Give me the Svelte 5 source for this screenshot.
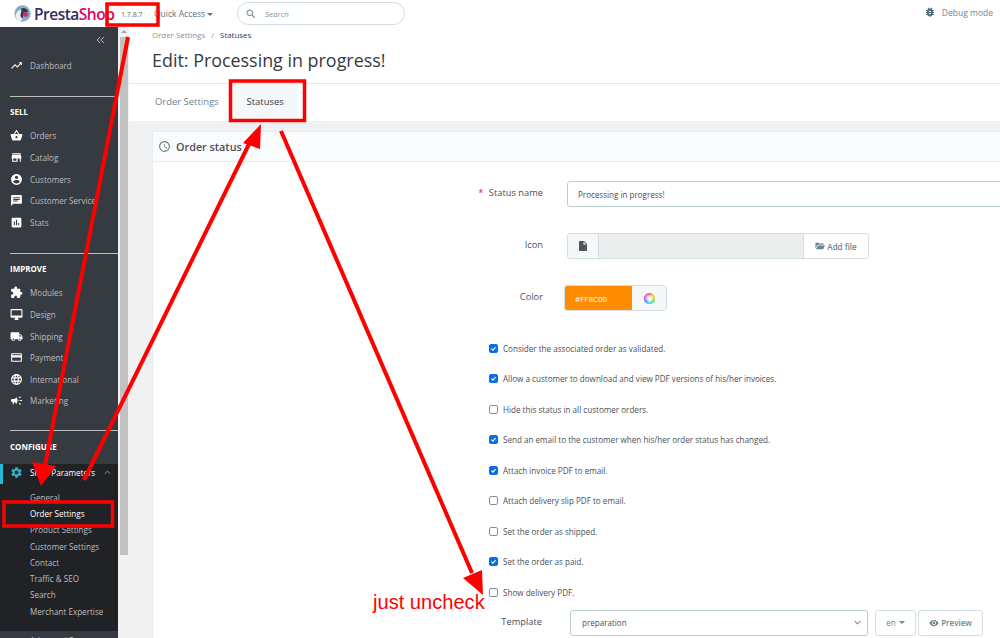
<script>
  const icons = {
    trend: 'M16 6l2.29 2.29-4.88 4.88-4-4L2 16.59 3.41 18l6-6 4 4 6.3-6.29L22 12V6z',
    basket: 'M17.21 9l-4.38-6.56c-.19-.28-.51-.42-.83-.42-.32 0-.64.14-.83.43L6.79 9H2c-.55 0-1 .45-1 1 0 .09.01.18.04.27l2.54 9.27c.23.84 1 1.46 1.92 1.46h13c.92 0 1.69-.62 1.93-1.46l2.54-9.27L23 10c0-.55-.45-1-1-1h-4.79zM9 9l3-4.4L15 9H9zm3 8c-1.1 0-2-.9-2-2s.9-2 2-2 2 .9 2 2-.9 2-2 2z',
    store: 'M20 4H4v2h16V4zm1 10v-2l-1-5H4l-1 5v2h1v6h10v-6h4v6h2v-6h1zm-9 4H6v-4h6v4z',
    account: 'M12 2C6.48 2 2 6.48 2 12s4.48 10 10 10 10-4.48 10-10S17.52 2 12 2zm0 3c1.66 0 3 1.34 3 3s-1.34 3-3 3-3-1.34-3-3 1.34-3 3-3zm0 14.2c-2.5 0-4.71-1.28-6-3.22.03-1.99 4-3.08 6-3.08 1.99 0 5.97 1.09 6 3.08-1.29 1.94-3.5 3.22-6 3.22z',
    chat: 'M20 2H4c-1.1 0-1.99.9-1.99 2L2 22l4-4h14c1.1 0 2-.9 2-2V4c0-1.1-.9-2-2-2zM6 9h12v2H6V9zm8 5H6v-2h8v2zm4-6H6V6h12v2z',
    stats: 'M19 3H5c-1.1 0-2 .9-2 2v14c0 1.1.9 2 2 2h14c1.1 0 2-.9 2-2V5c0-1.1-.9-2-2-2zM9 17H7v-7h2v7zm4 0h-2V7h2v10zm4 0h-2v-4h2v4z',
    puzzle: 'M20.5 11H19V7c0-1.1-.9-2-2-2h-4V3.5C13 2.12 11.88 1 10.5 1S8 2.12 8 3.5V5H4c-1.1 0-1.99.9-1.99 2v3.8H3.5c1.49 0 2.7 1.21 2.7 2.7s-1.21 2.7-2.7 2.7H2V20c0 1.1.9 2 2 2h3.8v-1.5c0-1.49 1.21-2.7 2.7-2.7 1.49 0 2.7 1.21 2.7 2.7V22H17c1.1 0 2-.9 2-2v-4h1.5c1.38 0 2.5-1.12 2.5-2.5S21.88 11 20.5 11z',
    desktop: 'M21 2H3c-1.1 0-2 .9-2 2v12c0 1.1.9 2 2 2h7l-2 3v1h8v-1l-2-3h7c1.1 0 2-.9 2-2V4c0-1.1-.9-2-2-2zm0 12H3V4h18v10z',
    truck: 'M20 8h-3V4H3c-1.1 0-2 .9-2 2v11h2c0 1.66 1.34 3 3 3s3-1.34 3-3h6c0 1.66 1.34 3 3 3s3-1.34 3-3h2v-5l-3-4zM6 18.5c-.83 0-1.5-.67-1.5-1.5s.67-1.5 1.5-1.5 1.5.67 1.5 1.5-.67 1.5-1.5 1.5zm13.5-9l1.96 2.5H17V9.5h2.5zm-1.5 9c-.83 0-1.5-.67-1.5-1.5s.67-1.5 1.5-1.5 1.5.67 1.5 1.5-.67 1.5-1.5 1.5z',
    card: 'M20 4H4c-1.11 0-1.99.89-1.99 2L2 18c0 1.11.89 2 2 2h16c1.11 0 2-.89 2-2V6c0-1.11-.89-2-2-2zm0 14H4v-6h16v6zm0-10H4V6h16v2z',
    globe: 'M11.99 2C6.47 2 2 6.48 2 12s4.47 10 9.99 10C17.52 22 22 17.52 22 12S17.52 2 11.99 2zm6.93 6h-2.95c-.32-1.25-.78-2.45-1.38-3.56 1.84.63 3.37 1.91 4.33 3.56zM12 4.04c.83 1.2 1.48 2.53 1.91 3.96h-3.82c.43-1.43 1.08-2.76 1.91-3.96zM4.26 14C4.1 13.36 4 12.69 4 12s.1-1.36.26-2h3.38c-.08.66-.14 1.32-.14 2 0 .68.06 1.34.14 2H4.26zm.82 2h2.95c.32 1.25.78 2.45 1.38 3.56-1.84-.63-3.37-1.9-4.33-3.56zm2.95-8H5.08c.96-1.66 2.49-2.93 4.33-3.56C8.81 5.55 8.35 6.75 8.03 8zM12 19.96c-.83-1.2-1.48-2.53-1.91-3.96h3.82c-.43 1.43-1.08 2.76-1.91 3.96zM14.34 14H9.66c-.09-.66-.16-1.32-.16-2 0-.68.07-1.35.16-2h4.68c.09.65.16 1.32.16 2 0 .68-.07 1.34-.16 2zm.25 5.56c.6-1.11 1.06-2.31 1.38-3.56h2.95c-.96 1.65-2.49 2.93-4.33 3.56zM16.36 14c.08-.66.14-1.32.14-2 0-.68-.06-1.34-.14-2h3.38c.16.64.26 1.31.26 2s-.1 1.36-.26 2h-3.38z',
    horn: 'M18 11v2h4v-2h-4zm-2 6.61c.96.71 2.21 1.65 3.2 2.39.4-.53.8-1.07 1.2-1.6-.99-.74-2.24-1.68-3.2-2.4-.4.54-.8 1.08-1.2 1.61zM20.4 5.6c-.4-.53-.8-1.07-1.2-1.6-.99.74-2.24 1.68-3.2 2.4.4.53.8 1.07 1.2 1.6.96-.72 2.21-1.65 3.2-2.4zM4 9c-1.1 0-2 .9-2 2v2c0 1.1.9 2 2 2h1v4h2v-4h1l5 3V6L8 9H4zm11.5 3c0-1.33-.58-2.53-1.5-3.35v6.69c.92-.81 1.5-2.01 1.5-3.34z',
    gear: 'M19.14 12.94c.04-.3.06-.61.06-.94 0-.32-.02-.64-.07-.94l2.03-1.58c.18-.14.23-.41.12-.61l-1.92-3.32c-.12-.22-.37-.29-.59-.22l-2.39.96c-.5-.38-1.03-.7-1.62-.94l-.36-2.54c-.04-.24-.24-.41-.48-.41h-3.84c-.24 0-.43.17-.47.41l-.36 2.54c-.59.24-1.13.57-1.62.94l-2.39-.96c-.22-.08-.47 0-.59.22L2.74 8.87c-.12.21-.08.47.12.61l2.03 1.58c-.05.3-.09.63-.09.94s.02.64.07.94l-2.03 1.58c-.18.14-.23.41-.12.61l1.92 3.32c.12.22.37.29.59.22l2.39-.96c.5.38 1.03.7 1.62.94l.36 2.54c.05.24.24.41.48.41h3.84c.24 0 .44-.17.47-.41l.36-2.54c.59-.24 1.13-.56 1.62-.94l2.39.96c.22.08.47 0 .59-.22l1.92-3.32c.12-.22.07-.47-.12-.61l-2.01-1.58zM12 15.6c-1.98 0-3.6-1.62-3.6-3.6s1.62-3.6 3.6-3.6 3.6 1.62 3.6 3.6-1.62 3.6-3.6 3.6z',
    bug: 'M20 8h-2.81c-.45-.78-1.07-1.45-1.82-1.96L17 4.41 15.59 3l-2.17 2.17C12.96 5.06 12.49 5 12 5c-.49 0-.96.06-1.41.17L8.41 3 7 4.41l1.62 1.63C7.88 6.55 7.26 7.22 6.81 8H4v2h2.09c-.05.33-.09.66-.09 1v1H4v2h2v1c0 .34.04.67.09 1H4v2h2.81c1.04 1.79 2.97 3 5.19 3s4.15-1.21 5.19-3H20v-2h-2.09c.05-.33.09-.66.09-1v-1h2v-2h-2v-1c0-.34-.04-.67-.09-1H20V8zm-6 8h-4v-2h4v2zm0-4h-4v-2h4v2z',
    search: 'M15.5 14h-.79l-.28-.27C15.41 12.59 16 11.11 16 9.5 16 5.91 13.09 3 9.5 3S3 5.91 3 9.5 5.91 16 9.5 16c1.61 0 3.09-.59 4.23-1.57l.27.28v.79l5 4.99L20.49 19l-4.99-5zm-6 0C7.01 14 5 11.99 5 9.5S7.01 5 9.5 5 14 7.01 14 9.5 11.99 14 9.5 14z',
    clock: 'M11.99 2C6.47 2 2 6.48 2 12s4.47 10 9.99 10C17.52 22 22 17.52 22 12S17.52 2 11.99 2zM12 20c-4.42 0-8-3.58-8-8s3.58-8 8-8 8 3.58 8 8-3.58 8-8 8zm.5-13H11v6l5.25 3.15.75-1.23-4.5-2.67z',
    file: 'M6 2c-1.1 0-1.99.9-1.99 2L4 20c0 1.1.89 2 1.99 2H18c1.1 0 2-.9 2-2V8l-6-6H6zm7 7V3.5L18.5 9H13z',
    folder: 'M1 6c0-1.1.9-2 2-2h6l2 2h8c1.1 0 2 .9 2 2v1H6.5L1 18V6zm6.5 5H24l-4.5 9H2z',
    eye: 'M12 4.5C7 4.5 2.73 7.61 1 12c1.73 4.39 6 7.5 11 7.5s9.27-3.11 11-7.5c-1.73-4.39-6-7.5-11-7.5zM12 17c-2.76 0-5-2.24-5-5s2.24-5 5-5 5 2.24 5 5-2.24 5-5 5zm0-8c-1.66 0-3 1.34-3 3s1.34 3 3 3 3-1.34 3-3-1.34-3-3-3z'
  };

  const sell = [
    ['Orders', 'basket'],
    ['Catalog', 'store'],
    ['Customers', 'account'],
    ['Customer Service', 'chat'],
    ['Stats', 'stats']
  ];
  const improve = [
    ['Modules', 'puzzle'],
    ['Design', 'desktop'],
    ['Shipping', 'truck'],
    ['Payment', 'card'],
    ['International', 'globe'],
    ['Marketing', 'horn']
  ];
  const subItems = ['General', 'Order Settings', 'Product Settings', 'Customer Settings', 'Contact', 'Traffic & SEO', 'Search', 'Merchant Expertise'];

  const options = [
    ['Consider the associated order as validated.', true],
    ['Allow a customer to download and view PDF versions of his/her invoices.', true],
    ['Hide this status in all customer orders.', false],
    ['Send an email to the customer when his/her order status has changed.', true],
    ['Attach invoice PDF to email.', true],
    ['Attach delivery slip PDF to email.', false],
    ['Set the order as shipped.', false],
    ['Set the order as paid.', true],
    ['Show delivery PDF.', false]
  ];
</script>

{#snippet icon(name, cls)}
  <svg class={cls} viewBox="0 0 24 24" aria-hidden="true"><path d={icons[name]} fill="currentColor" /></svg>
{/snippet}

{#snippet navItem(item)}
  <a class="nav-item">
    {@render icon(item[1], 'nav-icon')}
    <span>{item[0]}</span>
  </a>
{/snippet}

<div class="page">
  <header class="topbar">
    <div class="logo">
      <svg class="puffin" viewBox="0 0 24 24" aria-hidden="true">
        <circle cx="12" cy="12" r="11.500" fill="#7fb3c2" />
        <path d="M2 15c2-7 7-9 11-8 2 2 1 6 0 9-1 3-2 6-4 7-3-1-6-4-7-8z" fill="#f4f1ec" />
        <path d="M10 5c4-2 9 0 10 5l-6 1-2 8c-2-1-3-3-3-5 1-3 2-6 1-9z" fill="#3a3650" />
        <path d="M13 10l8 2-3 5-5-1z" fill="#e0236f" />
      </svg>
      <span class="logo-text"><span class="presta">Presta</span><span class="shop">Shop</span></span>
    </div>
    <span class="version">1.7.8.7</span>
    <span class="quick">Quick Access <i class="caret"></i></span>
    <div class="search">
      {@render icon('search', 'search-icon')}
      <span>Search</span>
    </div>
    <div class="debug">
      {@render icon('bug', 'debug-icon')}
      <span>Debug mode</span>
    </div>
  </header>

  <div class="body">
    <aside class="sidebar">
      <div class="collapse">
        <svg viewBox="0 0 12 10" aria-hidden="true"><path d="M5.5 1L1.5 5l4 4M10.5 1l-4 4 4 4" fill="none" stroke="currentColor" stroke-width="1.3" /></svg>
      </div>
      <a class="nav-item dash">
        {@render icon('trend', 'nav-icon')}
        <span>Dashboard</span>
      </a>
      <div class="group first">
        <h5>SELL</h5>
        {#each sell as item}{@render navItem(item)}{/each}
      </div>
      <div class="group second">
        <h5>IMPROVE</h5>
        {#each improve as item}{@render navItem(item)}{/each}
      </div>
      <div class="group third">
        <h5>CONFIGURE</h5>
      </div>
      <div class="open">
        <a class="nav-item active">
          {@render icon('gear', 'nav-icon gear')}
          <span>Shop Parameters</span>
          <svg class="chev" viewBox="0 0 10 6" aria-hidden="true"><path d="M1 5l4-4 4 4" fill="none" stroke="currentColor" stroke-width="1" /></svg>
        </a>
        <ul>
          {#each subItems as sub, i}
            <li class:current={i === 1}>{sub}</li>
          {/each}
        </ul>
      </div>
      <a class="nav-item after"><span>Advanced Parameters</span></a>
    </aside>

    <div class="scrollbar">
      <i class="up"></i>
      <div class="thumb"></div>
    </div>

    <main class="content">
      <div class="head">
        <div class="crumbs"><span>Order Settings</span><em>/</em><b>Statuses</b></div>
        <h1>Edit: Processing in progress!</h1>
      </div>
      <nav class="tabs">
        <a>Order Settings</a>
        <a class="tab-on">Statuses</a>
      </nav>
      <div class="canvas">
        <section class="card">
          <div class="card-head">
            {@render icon('clock', 'clock')}
            <span>Order status</span>
          </div>
          <div class="card-body">
            <div class="row name-row">
              <label class="lbl"><i>*</i> Status name</label>
              <div class="input name">Processing in progress!</div>
            </div>
            <div class="row icon-row">
              <label class="lbl">Icon</label>
              <div class="file">
                <div class="file-ico">{@render icon('file', 'file-icon')}</div>
                <div class="file-path"></div>
                <div class="file-btn">{@render icon('folder', 'btn-icon')} Add file</div>
              </div>
            </div>
            <div class="row color-row">
              <label class="lbl">Color</label>
              <div class="color">
                <div class="swatch">#FF8C00</div>
                <div class="wheel-box"><i class="wheel"></i></div>
              </div>
            </div>
            <div class="checks">
              {#each options as opt}
                <div class="check">
                  <i class="box" class:on={opt[1]}>
                    {#if opt[1]}
                      <svg viewBox="0 0 10 10" aria-hidden="true"><path d="M2 5.2l2.2 2.2L8 3" fill="none" stroke="#fff" stroke-width="1.5" /></svg>
                    {/if}
                  </i>
                  <span>{opt[0]}</span>
                </div>
              {/each}
            </div>
            <div class="row tpl-row">
              <label class="lbl tpl-lbl">Template</label>
              <div class="input select">
                <span>preparation</span>
                <svg viewBox="0 0 10 6" aria-hidden="true"><path d="M1 1l4 4 4-4" fill="none" stroke="#444" stroke-width="1.4" /></svg>
              </div>
              <div class="lang">en <i class="caret"></i></div>
              <div class="preview">{@render icon('eye', 'btn-icon')} Preview</div>
            </div>
          </div>
        </section>
      </div>
    </main>
  </div>

  <!-- red markup drawn over the screenshot -->
  <svg class="markup" viewBox="0 0 1000 638" aria-hidden="true">
    <g fill="none" stroke="#f00" stroke-width="3.500">
      <rect x="107" y="4" width="51" height="21" />
      <rect x="230.500" y="81" width="74" height="39.500" />
      <rect x="4" y="502" width="108.500" height="24" />
    </g>
    <g stroke="#f00" stroke-width="4" fill="#f00">
      <path d="M128 37L45 465" />
      <path d="M84 480L250 142" />
      <path d="M281 131L472 573" />
    </g>
    <g fill="#f00">
      <path d="M41 486L32 462L56 466z" />
      <path d="M261 124L243 143L260 149z" />
      <path d="M483 595L463 578L482 570z" />
    </g>
  </svg>
  <div class="note">just uncheck</div>
</div>

<style>
  :global(body) {
    margin: 0;
    background: #fff;
  }

  .page {
    position: relative;
    width: 1000px;
    height: 638px;
    overflow: hidden;
    font-family: "Open Sans", "Liberation Sans", sans-serif;
    font-size: 8.100px;
    color: #4b4f56;
  }

  .topbar {
    display: flex;
    align-items: center;
    height: 27px;
    background: #fff;
  }
  .logo {
    display: flex;
    align-items: center;
    gap: 3px;
    width: 121px;
    padding-left: 14px;
    box-sizing: border-box;
    flex: none;
  }
  .puffin {
    width: 17px;
    height: 17px;
    flex: none;
  }
  .logo-text {
    font-weight: 600;
    font-size: 15.500px;
    letter-spacing: -0.5px;
    white-space: nowrap;
  }
  .presta { color: #352c5c; }
  .shop { color: #df0067; }
  .version {
    font-size: 7px;
    width: 33px;
    margin-top: 1px;
    color: #666;
    flex: none;
  }
  .quick {
    font-size: 8.500px;
    width: 83px;
    color: #6c6f75;
    flex: none;
    white-space: nowrap;
  }
  .caret {
    display: inline-block;
    border: 3px solid transparent;
    border-top-color: currentColor;
    border-bottom: 0;
    vertical-align: 1px;
  }
  .search {
    display: flex;
    align-items: center;
    gap: 8px;
    width: 168px;
    height: 23px;
    box-sizing: border-box;
    padding-left: 7px;
    border: 1px solid #cfdde2;
    border-radius: 12px;
    color: #8a8f94;
    font-size: 8px;
    font-style: italic;
    flex: none;
  }
  .search-icon {
    width: 12px;
    height: 12px;
    color: #6c868e;
  }
  .debug {
    display: flex;
    align-items: center;
    gap: 6px;
    margin-left: auto;
    margin-right: 7px;
    margin-top: -3px;
    color: #6c868e;
    font-size: 8.500px;
  }
  .debug-icon {
    width: 12px;
    height: 12px;
    color: #4f6f7d;
  }

  .body {
    display: flex;
    height: 611px;
  }

  .sidebar {
    width: 118px;
    flex: none;
    background: #363a41;
    color: #bebebe;
    overflow: hidden;
  }
  .collapse {
    height: 26px;
    display: flex;
    justify-content: flex-end;
    align-items: center;
    padding-right: 13px;
  }
  .collapse svg {
    width: 9px;
    height: 8px;
  }
  .nav-item {
    display: flex;
    align-items: center;
    height: 21.600px;
    padding-left: 10px;
    gap: 7px;
    white-space: nowrap;
  }
  .nav-icon {
    width: 13px;
    height: 13px;
    color: #fff;
    flex: none;
  }
  .dash {
    margin-top: 2px;
  }
  .group {
    margin: 0 0 0 10px;
    border-top: 1px solid #bebebe;
  }
  .group .nav-item {
    margin-left: -10px;
  }
  .group h5 {
    margin: 0;
    color: #fff;
    font-size: 8px;
    font-weight: 700;
    line-height: 11px;
    padding-top: 9.500px;
    padding-bottom: 8px;
  }
  .first { margin-top: 19px; padding-bottom: 19.500px; }
  .second { padding-bottom: 18.500px; }
  .third { padding-bottom: 4px; }

  .open {
    background: #202226;
    height: 167px;
  }
  .active {
    box-sizing: border-box;
    height: 20px;
    border-left: 3px solid #25b9d7;
    padding-left: 7px;
    padding-bottom: 2px;
    color: #fff;
  }
  .gear {
    color: #25b9d7;
  }
  .chev {
    width: 7px;
    height: 5px;
    margin-left: 2px;
    color: #bebebe;
  }
  .open ul {
    list-style: none;
    margin: 6px 0 0;
    padding: 0 0 0 30px;
  }
  .open li {
    height: 16.300px;
    line-height: 16.300px;
    white-space: nowrap;
  }
  .open li.current {
    color: #fff;
  }
  .after {
    padding-left: 30px;
    height: 20px;
  }

  .scrollbar {
    width: 11px;
    flex: none;
    background: #f1f1f1;
  }
  .up {
    display: block;
    width: 0;
    margin: 3px auto 0;
    border: 3px solid transparent;
    border-top: 0;
    border-bottom: 3px solid #a3a3a3;
  }
  .thumb {
    margin: 4px 1px 0 2px;
    height: 518px;
    background: #c1c1c1;
  }

  .content {
    flex: 1;
    min-width: 0;
    display: flex;
    flex-direction: column;
    background: #eff1f2;
    overflow: hidden;
  }
  .head {
    flex: none;
    height: 57px;
    background: #fff;
    padding-left: 23px;
    border-bottom: 1px solid #e5e8ea;
    box-sizing: border-box;
  }
  .crumbs {
    display: flex;
    gap: 6px;
    font-size: 7.900px;
    line-height: 17px;
    color: #8a9298;
  }
  .crumbs em {
    font-style: normal;
  }
  .crumbs b {
    font-weight: 400;
    color: #363a41;
  }
  h1 {
    margin: 3px 0 0;
    font-size: 17.900px;
    line-height: 26px;
    font-weight: 400;
    color: #363a41;
  }
  .tabs {
    flex: none;
    display: flex;
    height: 37px;
    background: #fff;
    padding-left: 14px;
    align-items: stretch;
    font-size: 9.450px;
    color: #6c868e;
    box-sizing: border-box;
  }
  .tabs a {
    display: flex;
    align-items: center;
    padding: 0 12px 2px;
  }
  .tab-on {
    background: #f4f8fb;
    color: #363a41;
    padding: 0 14px 2px 16px !important;
  }
  .canvas {
    flex: none;
    padding: 10px 0 0 23px;
  }
  .card {
    width: 1000px;
    background: #fff;
    border: 1px solid #e8ecee;
    border-radius: 3px;
    height: 700px;
  }
  .card-head {
    display: flex;
    align-items: center;
    gap: 5px;
    height: 29px;
    padding-left: 5px;
    background: #fafbfc;
    border-bottom: 1px solid #e8ecee;
    font-size: 10.800px;
    font-weight: 600;
    color: #4b4f56;
  }
  .clock {
    width: 13px;
    height: 13px;
    color: #6c868e;
  }
  .card-body {
    padding-top: 19px;
  }

  .row {
    display: flex;
    align-items: flex-start;
  }
  .lbl {
    width: 390px;
    margin-right: 24px;
    text-align: right;
    font-size: 9.300px;
    line-height: 12px;
    flex: none;
    color: #4b4f56;
  }
  .lbl i {
    color: #e50b70;
    font-style: normal;
    margin-right: 3px;
  }
  .input {
    box-sizing: border-box;
    height: 26px;
    border: 1px solid #bbcdd2;
    border-radius: 3px;
    background: #fff;
    display: flex;
    align-items: center;
    padding-left: 10px;
    font-size: 8.050px;
  }
  .name {
    width: 600px;
  }
  .name-row .lbl {
    margin-top: 6px;
  }
  .icon-row {
    margin-top: 26px;
  }
  .icon-row .lbl, .color-row .lbl {
    padding-top: 6px;
  }
  .file {
    display: flex;
    box-sizing: border-box;
    width: 302px;
    height: 26px;
    border: 1px solid #d3dfe3;
    border-radius: 3px;
    overflow: hidden;
  }
  .file-ico {
    width: 30px;
    display: flex;
    align-items: center;
    justify-content: center;
    background: #f4f8fb;
    border-right: 1px solid #d3dfe3;
  }
  .file-icon {
    width: 12px;
    height: 12px;
    color: #555;
  }
  .file-path {
    flex: 1;
    background: #eceeed;
  }
  .file-btn {
    width: 64px;
    display: flex;
    align-items: center;
    justify-content: center;
    gap: 2px;
    border-left: 1px solid #d3dfe3;
    font-weight: 600;
    font-size: 8px;
    color: #6c868e;
  }
  .btn-icon {
    width: 10px;
    height: 10px;
    color: #6c868e;
  }
  .color-row {
    margin-top: 26px;
  }
  .color {
    display: flex;
    box-sizing: border-box;
    width: 103px;
    height: 26px;
    margin-left: -3px;
    border: 1px solid #d3dfe3;
    border-radius: 3px;
    overflow: hidden;
  }
  .swatch {
    width: 67px;
    display: flex;
    align-items: center;
    padding-left: 10px;
    box-sizing: border-box;
    background: #ff8c00;
    color: #fff;
    font-size: 8px;
  }
  .wheel-box {
    flex: 1;
    display: flex;
    align-items: center;
    justify-content: center;
    background: #f4f8fb;
  }
  .wheel {
    width: 11px;
    height: 11px;
    border-radius: 50%;
    background: radial-gradient(circle, #fff 0 15%, rgba(255,255,255,0) 70%), conic-gradient(#ff4040, #ffd000, #40e040, #30d0ff, #4060ff, #e040e0, #ff4040);
  }
  .checks {
    margin-top: 22px;
    padding-left: 336px;
  }
  .check {
    display: flex;
    align-items: center;
    gap: 5px;
    height: 30.500px;
    font-size: 8.100px;
  }
  .box {
    box-sizing: border-box;
    width: 9px;
    height: 9px;
    border: 1px solid #8a8f94;
    border-radius: 2px;
    background: #fff;
    display: flex;
  }
  .box.on {
    background: #0a6fe0;
    border-color: #0a6fe0;
  }
  .box svg {
    width: 7px;
    height: 7px;
  }
  .tpl-row {
    margin-top: 2px;
  }
  .tpl-lbl {
    padding-top: 6px;
    width: 389px;
    margin-right: 28px;
  }
  .select {
    width: 298px;
    justify-content: space-between;
    padding-right: 6px;
    padding-left: 11px;
  }
  .select svg {
    width: 7px;
    height: 5px;
  }
  .lang {
    box-sizing: border-box;
    width: 41px;
    height: 26px;
    margin-left: 7px;
    border: 1px solid #d3dfe3;
    border-radius: 3px;
    display: flex;
    align-items: center;
    justify-content: center;
    gap: 3px;
    color: #6c868e;
  }
  .preview {
    box-sizing: border-box;
    width: 65px;
    height: 26px;
    margin-left: 2px;
    border: 1px solid #d3dfe3;
    border-radius: 3px;
    display: flex;
    align-items: center;
    justify-content: center;
    gap: 2px;
    font-weight: 600;
    font-size: 8px;
    color: #6c868e;
  }

  .markup {
    position: absolute;
    inset: 0;
    width: 1000px;
    height: 638px;
    pointer-events: none;
  }
  .note {
    position: absolute;
    left: 373px;
    top: 590px;
    font-family: "Liberation Sans", sans-serif;
    font-size: 20.100px;
    line-height: 24px;
    color: #f00;
    white-space: nowrap;
  }
</style>
